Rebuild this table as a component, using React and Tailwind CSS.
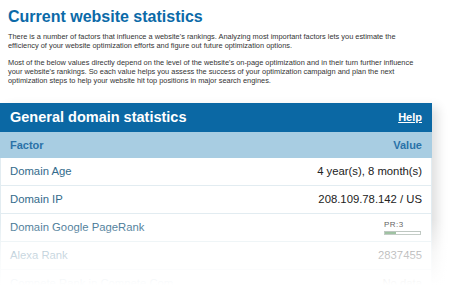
const rows = [
  { factor: "Domain Age", value: "4 year(s), 8 month(s)" },
  { factor: "Domain IP", value: "208.109.78.142 / US" },
  { factor: "Domain Google PageRank", pr: 3 },
  { factor: "Alexa Rank", value: "2837455" },
  { factor: "Compete Rank in Compete.Com", value: "No data" },
];

function PageRank({ value }) {
  return (
    <div className="flex flex-col items-start pr-[1px]">
      <span className="text-[8px] leading-[9px] tracking-[0.5px] text-[#555]">PR:{value}</span>
      <div className="mt-[2px] h-[4px] w-[37px] border border-[#a9b5ad] bg-white">
        <div className="h-full bg-[#7aab7f]" style={{ width: `${value * 10}%` }} />
      </div>
    </div>
  );
}

export default function App() {
  return (
    <div className="relative h-[285px] w-[450px] overflow-hidden bg-white font-['Liberation_Sans',Arial,sans-serif]">
      <div className="px-[8px] pt-[7px]">
        <h1 className="text-[16px] font-bold leading-[20px] text-[#0b6aa8]">
          Current website statistics
        </h1>
        <p className="mt-[5px] text-[7.4px] leading-[9px] text-[#333]">
          There is a number of factors that influence a website's rankings. Analyzing most important factors lets you estimate the
          <br />
          efficiency of your website optimization efforts and figure out future optimization options.
        </p>
        <p className="mt-[8px] text-[7.4px] leading-[9px] text-[#333]">
          Most of the below values directly depend on the level of the website's on-page optimization and in their turn further influence
          <br />
          your website's rankings. So each value helps you assess the success of your optimization campaign and plan the next
          <br />
          optimization steps to help your website hit top positions in major search engines.
        </p>
      </div>

      <div className="mt-[18px] w-[432px] bg-white shadow-[6px_4px_10px_rgba(0,0,0,0.12)]">
        <div className="flex h-[29px] items-center justify-between bg-[#0b68a4] px-[10px] text-white">
          <span className="text-[14.5px] font-bold">General domain statistics</span>
          <a href="#" className="text-[11px] font-bold underline">
            Help
          </a>
        </div>
        <div className="flex h-[26px] items-center justify-between bg-[#a8cde2] px-[10px] text-[11px] font-bold text-[#2a72a8]">
          <span>Factor</span>
          <span>Value</span>
        </div>
        <div className="border-x border-[#e2ecf1]">
          {rows.map((r) => (
            <div
              key={r.factor}
              className="flex h-[28px] items-center justify-between border-b border-[#e2ecf1] px-[9px] text-[11.3px]"
            >
              <span className="text-[#336b8c]">{r.factor}</span>
              {r.pr != null ? <PageRank value={r.pr} /> : <span className="text-[#222]">{r.value}</span>}
            </div>
          ))}
        </div>
      </div>

      {/* fade at the bottom */}
      <div className="pointer-events-none absolute inset-x-0 bottom-0 h-[65px] bg-gradient-to-b from-white/0 via-white/70 to-white" />
    </div>
  );
}
